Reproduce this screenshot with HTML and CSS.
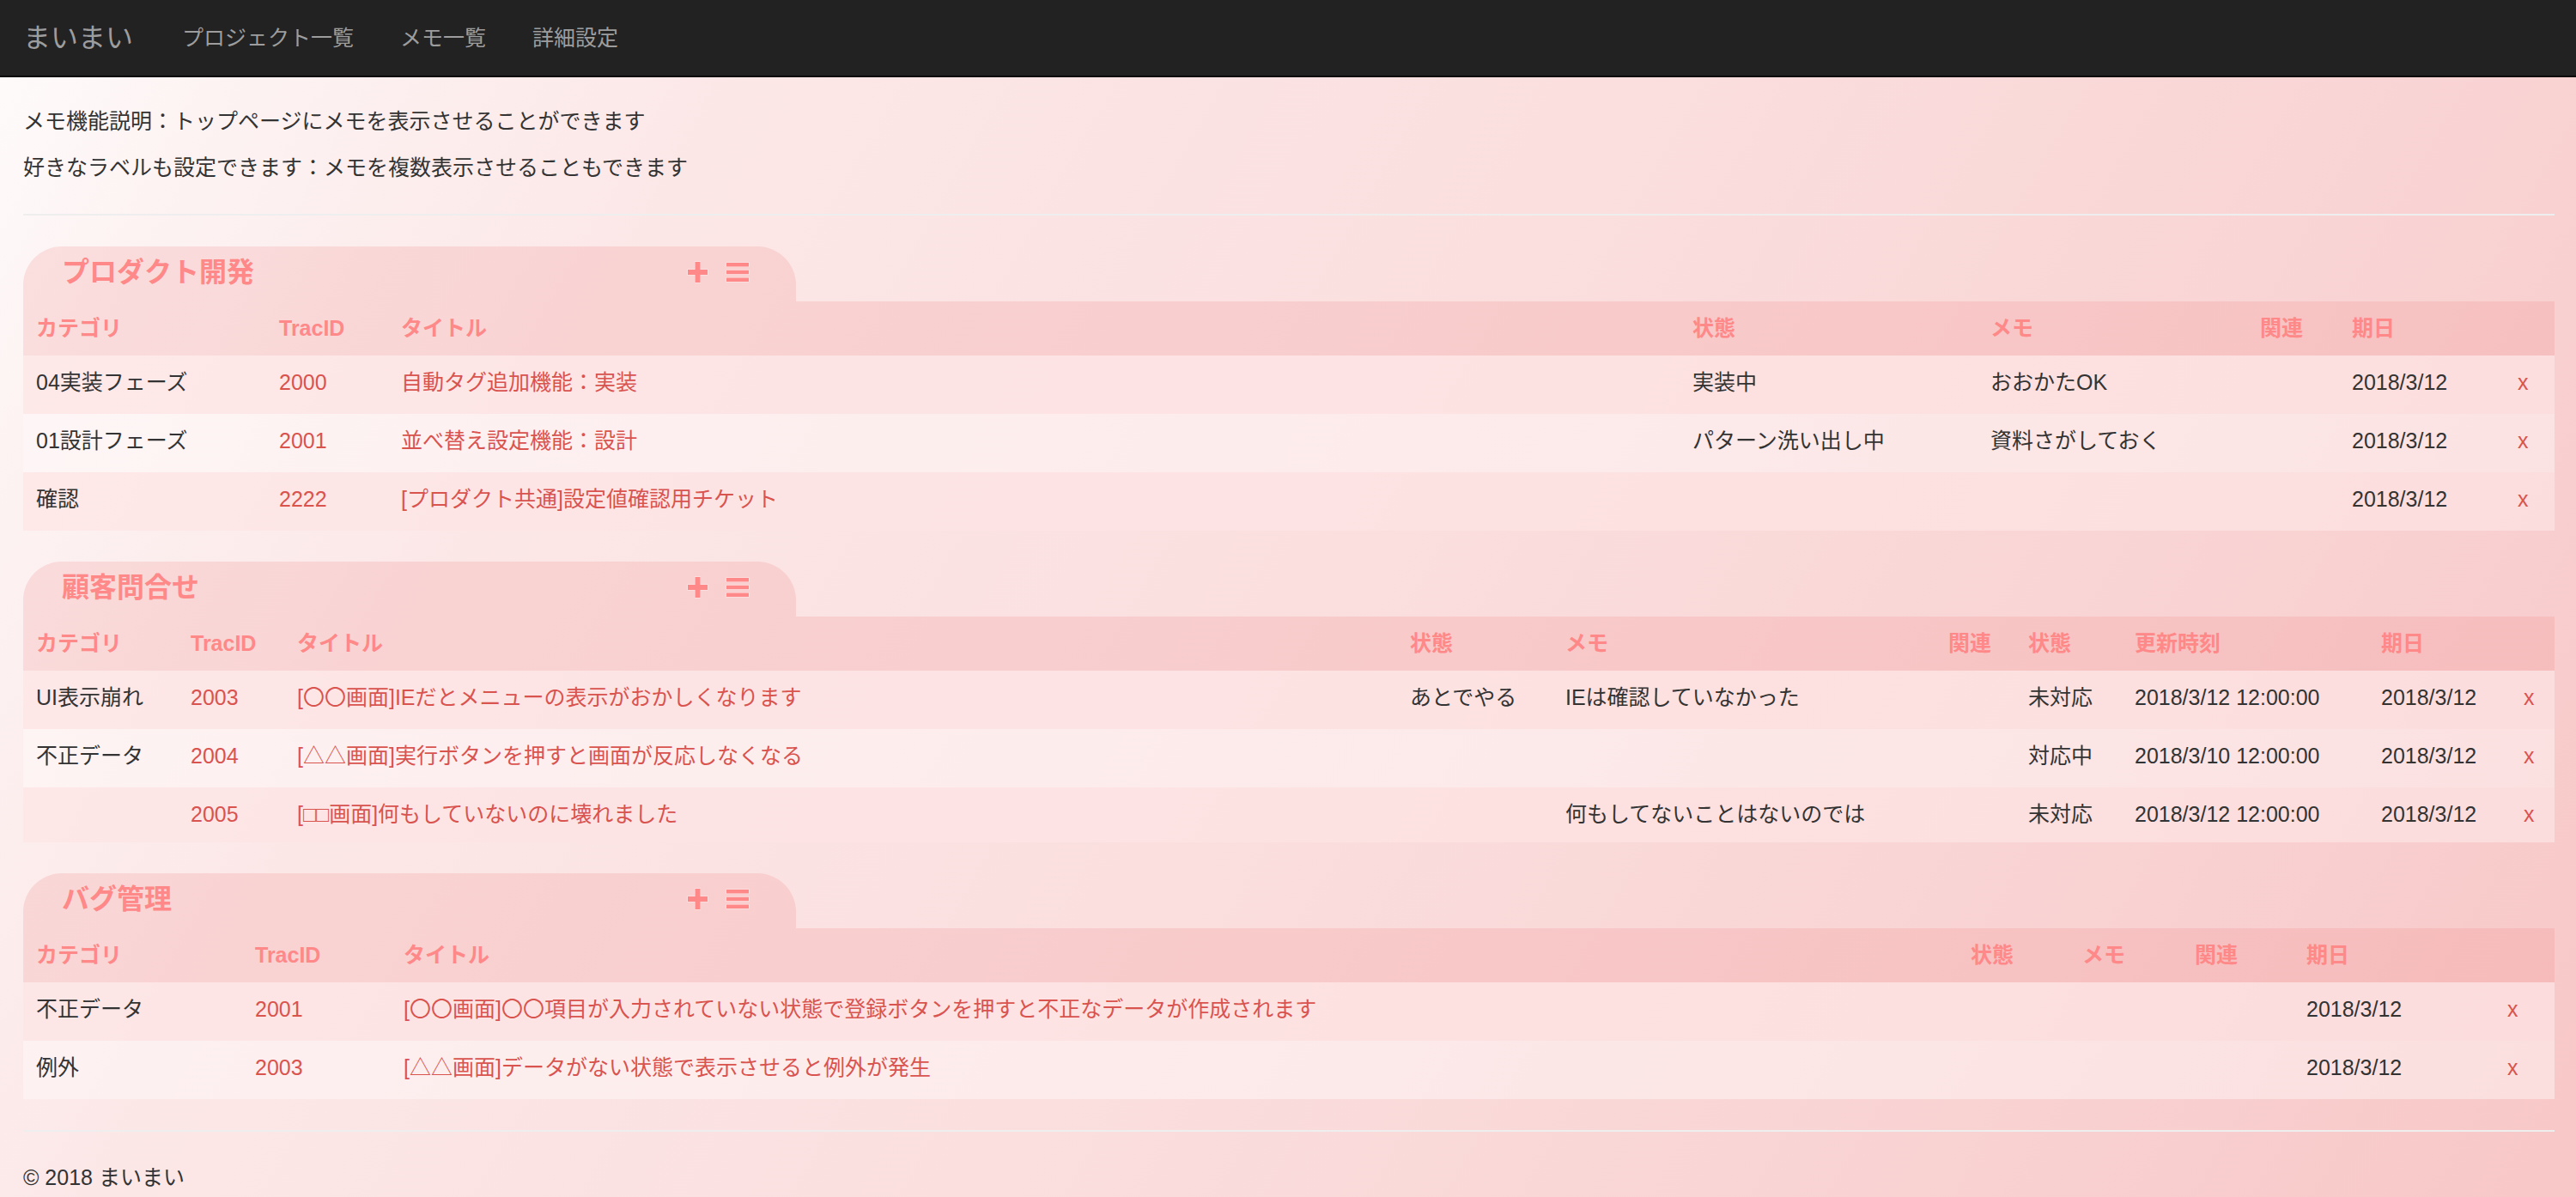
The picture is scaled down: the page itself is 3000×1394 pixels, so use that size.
FILE: index.html
```html
<!DOCTYPE html>
<html lang="ja">
<head>
<meta charset="utf-8">
<title>まいまい</title>
<link rel="stylesheet" href="styles.css">
</head>
<body>
<nav class="navbar">
  <div class="nav-inner">
    <a class="brand" href="#">まいまい</a>
    <ul class="nav-links">
      <li><a href="#">プロジェクト一覧</a></li>
      <li><a href="#">メモ一覧</a></li>
      <li><a href="#">詳細設定</a></li>
    </ul>
  </div>
</nav>

<main class="container">
  <p class="intro">メモ機能説明：トップページにメモを表示させることができます</p>
  <p class="intro">好きなラベルも設定できます：メモを複数表示させることもできます</p>
  <hr class="rule">

  <section class="panel">
    <div class="panel-tab">
      <h2 class="panel-title">プロダクト開発</h2>
      <div class="tab-icons">
        <svg class="icon icon-plus" width="25" height="26" viewBox="0 0 25 26"><path d="M9.5 1h6v9h8.5v6h-8.5v9h-6v-9h-8.5v-6h8.5z"/></svg>
        <svg class="icon icon-menu" width="28" height="24" viewBox="0 0 28 24"><path d="M1 1h26v4.5h-26z M1 9.8h26v4.5h-26z M1 18.5h26v4.5h-26z"/></svg>
      </div>
    </div>
    <table class="memo-table t-prod">
      <colgroup><col class="c1"><col class="c2"><col class="c3"><col class="c4"><col class="c5"><col class="c6"><col class="c7"><col class="c8"></colgroup>
      <thead>
        <tr><th>カテゴリ</th><th>TracID</th><th>タイトル</th><th>状態</th><th>メモ</th><th>関連</th><th>期日</th><th></th></tr>
      </thead>
      <tbody>
        <tr><td>04実装フェーズ</td><td><a href="#">2000</a></td><td><a href="#">自動タグ追加機能：実装</a></td><td>実装中</td><td>おおかたOK</td><td></td><td>2018/3/12</td><td><a href="#">x</a></td></tr>
        <tr><td>01設計フェーズ</td><td><a href="#">2001</a></td><td><a href="#">並べ替え設定機能：設計</a></td><td>パターン洗い出し中</td><td>資料さがしておく</td><td></td><td>2018/3/12</td><td><a href="#">x</a></td></tr>
        <tr><td>確認</td><td><a href="#">2222</a></td><td><a href="#">[プロダクト共通]設定値確認用チケット</a></td><td></td><td></td><td></td><td>2018/3/12</td><td><a href="#">x</a></td></tr>
      </tbody>
    </table>
  </section>

  <section class="panel">
    <div class="panel-tab">
      <h2 class="panel-title">顧客問合せ</h2>
      <div class="tab-icons">
        <svg class="icon icon-plus" width="25" height="26" viewBox="0 0 25 26"><path d="M9.5 1h6v9h8.5v6h-8.5v9h-6v-9h-8.5v-6h8.5z"/></svg>
        <svg class="icon icon-menu" width="28" height="24" viewBox="0 0 28 24"><path d="M1 1h26v4.5h-26z M1 9.8h26v4.5h-26z M1 18.5h26v4.5h-26z"/></svg>
      </div>
    </div>
    <table class="memo-table t-cust">
      <colgroup><col class="c1"><col class="c2"><col class="c3"><col class="c4"><col class="c5"><col class="c6"><col class="c7"><col class="c8"><col class="c9"><col class="c10"></colgroup>
      <thead>
        <tr><th>カテゴリ</th><th>TracID</th><th>タイトル</th><th>状態</th><th>メモ</th><th>関連</th><th>状態</th><th>更新時刻</th><th>期日</th><th></th></tr>
      </thead>
      <tbody>
        <tr><td>UI表示崩れ</td><td><a href="#">2003</a></td><td><a href="#">[〇〇画面]IEだとメニューの表示がおかしくなります</a></td><td>あとでやる</td><td>IEは確認していなかった</td><td></td><td>未対応</td><td>2018/3/12 12:00:00</td><td>2018/3/12</td><td><a href="#">x</a></td></tr>
        <tr><td>不正データ</td><td><a href="#">2004</a></td><td><a href="#">[△△画面]実行ボタンを押すと画面が反応しなくなる</a></td><td></td><td></td><td></td><td>対応中</td><td>2018/3/10 12:00:00</td><td>2018/3/12</td><td><a href="#">x</a></td></tr>
        <tr class="short-row"><td></td><td><a href="#">2005</a></td><td><a href="#">[□□画面]何もしていないのに壊れました</a></td><td></td><td>何もしてないことはないのでは</td><td></td><td>未対応</td><td>2018/3/12 12:00:00</td><td>2018/3/12</td><td><a href="#">x</a></td></tr>
      </tbody>
    </table>
  </section>

  <section class="panel">
    <div class="panel-tab">
      <h2 class="panel-title">バグ管理</h2>
      <div class="tab-icons">
        <svg class="icon icon-plus" width="25" height="26" viewBox="0 0 25 26"><path d="M9.5 1h6v9h8.5v6h-8.5v9h-6v-9h-8.5v-6h8.5z"/></svg>
        <svg class="icon icon-menu" width="28" height="24" viewBox="0 0 28 24"><path d="M1 1h26v4.5h-26z M1 9.8h26v4.5h-26z M1 18.5h26v4.5h-26z"/></svg>
      </div>
    </div>
    <table class="memo-table t-bug">
      <colgroup><col class="c1"><col class="c2"><col class="c3"><col class="c4"><col class="c5"><col class="c6"><col class="c7"><col class="c8"></colgroup>
      <thead>
        <tr><th>カテゴリ</th><th>TracID</th><th>タイトル</th><th>状態</th><th>メモ</th><th>関連</th><th>期日</th><th></th></tr>
      </thead>
      <tbody>
        <tr><td>不正データ</td><td><a href="#">2001</a></td><td><a href="#">[〇〇画面]〇〇項目が入力されていない状態で登録ボタンを押すと不正なデータが作成されます</a></td><td></td><td></td><td></td><td>2018/3/12</td><td><a href="#">x</a></td></tr>
        <tr><td>例外</td><td><a href="#">2003</a></td><td><a href="#">[△△画面]データがない状態で表示させると例外が発生</a></td><td></td><td></td><td></td><td>2018/3/12</td><td><a href="#">x</a></td></tr>
      </tbody>
    </table>
  </section>

  <hr class="rule">
  <footer class="footer">
    <p>© 2018 まいまい</p>
  </footer>
</main>
</body>
</html>
```

FILE: styles.css
```css
* {
  box-sizing: border-box;
}

html {
  min-height: 100%;
  background: linear-gradient(120deg, #fffcfc 0%, #fdf3f3 8%, #fce7e7 24%, #fbdfdf 50%, #f9d3d3 78%, #f8c7c7 100%);
}

body {
  margin: 0;
  font-family: "Liberation Sans", "Noto Sans CJK JP", sans-serif;
  font-size: 25px;
  line-height: 35.7px;
  color: #333;
}

a {
  text-decoration: none;
}

/* navbar */
.navbar {
  background: #222;
  border-bottom: 2px solid #080808;
  height: 90px;
  margin-bottom: 34px;
}

.nav-inner {
  display: flex;
  align-items: center;
  height: 88px;
  padding-left: 27px;
}

.brand {
  color: #9d9d9d;
  font-size: 32px;
  line-height: 36px;
  padding-right: 30px;
}

.nav-links {
  display: flex;
  list-style: none;
  margin: 0;
  padding: 0;
}

.nav-links a {
  display: block;
  color: #9d9d9d;
  font-size: 25px;
  line-height: 36px;
  padding: 0 27px;
}

/* main */
.container {
  padding: 0 25px 0 27px;
}

.intro {
  margin: 0 0 17.9px;
}

.rule {
  border: 0;
  border-top: 2px solid #eee;
  margin: 36px 0;
  height: 0;
}

/* panels */
.panel {
  margin-bottom: 36px;
}

.panel-tab {
  display: flex;
  align-items: center;
  width: 900px;
  height: 64px;
  padding: 0 54px 4px 45px;
  border-radius: 45px 45px 0 0;
  background: rgba(240, 130, 130, 0.2);
}

.panel-title {
  margin: 0;
  font-size: 32px;
  line-height: 36px;
  font-weight: bold;
  color: #f88;
}

.tab-icons {
  margin-left: auto;
  display: flex;
  align-items: center;
  gap: 20px;
}

.icon {
  display: block;
  fill: #f88;
  stroke: rgba(255, 240, 240, 0.85);
  stroke-width: 1.2;
  paint-order: stroke;
}

.memo-table {
  width: 100%;
  table-layout: fixed;
  border-collapse: collapse;
  border-spacing: 0;
}

.memo-table th,
.memo-table td {
  padding: 14px 15px 0;
  text-align: left;
  vertical-align: top;
  white-space: nowrap;
  overflow: visible;
}

.memo-table thead tr {
  height: 63px;
  background: rgba(240, 130, 130, 0.2);
}

.memo-table th {
  color: #f88;
  font-weight: bold;
}

.memo-table tbody tr {
  height: 68px;
}

.memo-table tbody tr.short-row {
  height: 64px;
}

.memo-table tbody tr:nth-child(odd) {
  background: rgba(253, 228, 228, 0.7);
}

.memo-table tbody tr:nth-child(even) {
  background: rgba(255, 250, 250, 0.45);
}

.memo-table td a {
  color: #d9534f;
}

/* column widths */
.t-prod .c1 { width: 283px; }
.t-prod .c2 { width: 142px; }
.t-prod .c3 { width: 1504px; }
.t-prod .c4 { width: 347px; }
.t-prod .c5 { width: 314px; }
.t-prod .c6 { width: 107px; }
.t-prod .c7 { width: 193px; }
.t-prod .c8 { width: 58px; }

.t-cust .c1 { width: 180px; }
.t-cust .c2 { width: 124px; }
.t-cust .c3 { width: 1296px; }
.t-cust .c4 { width: 181px; }
.t-cust .c5 { width: 446px; }
.t-cust .c6 { width: 93px; }
.t-cust .c7 { width: 124px; }
.t-cust .c8 { width: 287px; }
.t-cust .c9 { width: 166px; }
.t-cust .c10 { width: 51px; }

.t-bug .c1 { width: 255px; }
.t-bug .c2 { width: 173px; }
.t-bug .c3 { width: 1825px; }
.t-bug .c4 { width: 130px; }
.t-bug .c5 { width: 131px; }
.t-bug .c6 { width: 130px; }
.t-bug .c7 { width: 234px; }
.t-bug .c8 { width: 70px; }

/* footer */
.footer p {
  margin: 0;
}
```
